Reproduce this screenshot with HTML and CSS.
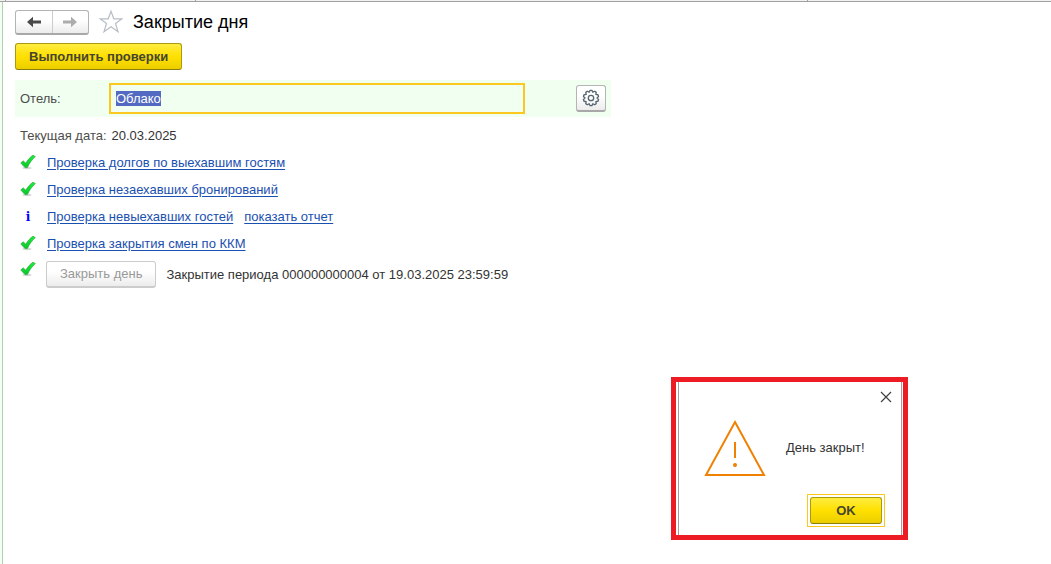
FILE: index.html
```html
<!DOCTYPE html>
<html lang="ru">
<head>
<meta charset="UTF-8">
<meta name="viewport" content="width=device-width, initial-scale=1.0">
<title>Закрытие дня</title>
<link rel="stylesheet" href="styles.css">
</head>
<body>

<svg class="sprite" aria-hidden="true">
  <defs>
    <linearGradient id="check-fill" x1="0" y1="0" x2="0" y2="1">
      <stop offset="0" stop-color="#18f03c"/>
      <stop offset="1" stop-color="#08c828"/>
    </linearGradient>
    <symbol id="check" viewBox="0 0 16 16">
      <ellipse cx="7" cy="14" rx="4.5" ry="1.2" fill="#d8d8d8"/>
      <path d="M.8 9 3 6.8 5.8 9.2C7.8 5.8 10 3.2 13 1.2L15.3 2.6C12 5.6 9.4 9 7.4 13.6L5 13.6Z" fill="url(#check-fill)" stroke="#2fa53c" stroke-width=".7"/>
    </symbol>
  </defs>
</svg>

<div class="tabs">
  <span class="tab tab-first"></span>
  <span class="tab tab-home"></span>
  <span class="tab tab-open"></span>
</div>

<main class="page">
  <header class="title-bar">
    <div class="history">
      <button class="history-button" aria-label="Назад">
        <svg width="16" height="12" viewBox="0 0 16 12"><path d="M1 6 7 .8V4.6H15V7.4H7V11.2Z" fill="#4a4a4a"/></svg>
      </button>
      <button class="history-button" aria-label="Вперед">
        <svg width="16" height="12" viewBox="0 0 16 12"><path d="M15 6 9 .8V4.6H1V7.4H9V11.2Z" fill="#acacac"/></svg>
      </button>
    </div>
    <button class="favorite" aria-label="В избранное">
      <svg width="24" height="24" viewBox="0 0 24 24"><path d="M12 1.2 14.8 8.8H23L16.5 13.5 19 21.8 12 16.8 5 21.8 7.5 13.5 1 8.8H9.2Z" fill="#fff" stroke="#b7bec6" stroke-width="1.2"/></svg>
    </button>
    <h1>Закрытие дня</h1>
  </header>

  <button class="button primary">Выполнить проверки</button>

  <div class="hotel">
    <label for="hotel-input">Отель:</label>
    <input type="text" id="hotel-input" value="Облако" autocomplete="off" spellcheck="false">
    <button class="button settings" aria-label="Настройки">
      <svg width="18" height="18" viewBox="0 0 18 18" fill="none" stroke="#566571" stroke-width="1.3" stroke-linejoin="round">
        <circle cx="9" cy="9" r="2.7"/>
        <path d="M8.06 1.36H9.94L10.85 3.29 12.73 2.27 14.25 3.37 13.85 5.47 15.98 5.75 16.56 7.53 15 9 16.56 10.47 15.98 12.25 13.85 12.53 14.25 14.63 12.73 15.73 10.85 14.71 9.94 16.64H8.06L7.15 14.71 5.27 15.73 3.75 14.63 4.15 12.53 2.02 12.25 1.44 10.47 3 9 1.44 7.53 2.02 5.75 4.15 5.47 3.75 3.37 5.27 2.27 7.15 3.29Z"/>
      </svg>
    </button>
  </div>

  <p class="row date"><span class="caption">Текущая дата:</span> <span>20.03.2025</span></p>

  <div class="row">
    <svg class="status"><use href="#check"/></svg>
    <a href="#">Проверка долгов по выехавшим гостям</a>
  </div>
  <div class="row">
    <svg class="status"><use href="#check"/></svg>
    <a href="#">Проверка незаехавших бронирований</a>
  </div>
  <div class="row">
    <span class="status info">i</span>
    <a href="#">Проверка невыехавших гостей</a>
    <a href="#">показать отчет</a>
  </div>
  <div class="row">
    <svg class="status"><use href="#check"/></svg>
    <a href="#">Проверка закрытия смен по ККМ</a>
  </div>
  <div class="row close-day">
    <svg class="status"><use href="#check"/></svg>
    <button class="button" disabled>Закрыть день</button>
    <span>Закрытие периода 000000000004 от 19.03.2025 23:59:59</span>
  </div>
</main>

<div class="message" role="dialog" aria-labelledby="message-text">
  <div class="message-window">
    <button class="message-close" aria-label="Закрыть">
      <svg width="12" height="12" viewBox="0 0 12 12"><path d="M1 1 11 11M11 1 1 11" stroke="#404040" stroke-width="1.2"/></svg>
    </button>
    <div class="message-body">
      <svg width="62" height="58" viewBox="0 0 62 58" fill="none" stroke="#f08000" stroke-width="2">
        <path d="M31 3 60 56H2Z"/>
        <path d="M31 23V39"/>
        <circle cx="31" cy="46" r="2" fill="#f08000" stroke="none"/>
      </svg>
      <p id="message-text">День закрыт!</p>
    </div>
    <div class="message-focus">
      <button class="button primary">OK</button>
    </div>
  </div>
</div>

<script>
const hotel = document.getElementById("hotel-input");
hotel.focus();
hotel.select();
</script>

</body>
</html>
```
FILE: styles.css
```css
* {
  box-sizing: border-box;
}

body {
  display: flex;
  flex-direction: column;
  min-height: 100vh;
  margin: 0;
  background: #fff;
  color: #333;
  font: 13px/16px "Liberation Sans", Arial, sans-serif;
}

h1,
p {
  margin: 0;
}

button,
input {
  font: inherit;
}

a {
  color: #1a50b0;
  text-underline-offset: 2px;
}

svg {
  display: block;
}

.sprite {
  position: absolute;
  width: 0;
  height: 0;
}

.tabs {
  display: flex;
  height: 2px;
  background: #f2f2f2;
  border-bottom: 1px solid #a0a0a0;
}

.tab {
  border-right: 1px solid #a0a0a0;
}

.tab-first {
  width: 6px;
}

.tab-home {
  width: 190px;
}

.tab-open {
  width: 612px;
}

.page {
  flex: 1;
  padding: 7px 12px;
  border-left: 1px solid #b4ccb4;
  margin-left: 2px;
  box-shadow: -2px 0 #f0fff0;
}

.title-bar {
  display: flex;
  align-items: center;
  height: 26px;
  margin-bottom: 8px;
}

.history {
  display: flex;
  width: 74px;
  height: 25px;
  border: 1px solid #b4b4b4;
  border-bottom: 2px solid #a8a8a8;
  border-radius: 3px;
  background: linear-gradient(#fff 40%, #ececec);
}

.history-button {
  display: flex;
  flex: 1;
  align-items: center;
  justify-content: center;
  padding: 0;
  border: 0;
  background: none;
}

.history-button + .history-button {
  border-left: 1px solid #ccc;
}

.favorite {
  padding: 0;
  margin: 0 10px;
  border: 0;
  background: none;
}

h1 {
  color: #000;
  font-size: 18px;
  font-weight: normal;
  line-height: 24px;
}

.button {
  height: 27px;
  padding: 0 13px;
  border: 1px solid #b4b4b4;
  border-bottom: 2px solid #a8a8a8;
  border-radius: 3px;
  background: linear-gradient(#fff 40%, #ececec);
  color: #404040;
}

.button:disabled {
  border-color: #ccc;
  color: #999;
}

.primary {
  border: 1px solid #a99a10;
  border-bottom-color: #8c7c08;
  background: linear-gradient(#ffec40, #ffe000 50%, #ecce00);
  color: #454530;
  font-weight: bold;
}

.hotel {
  display: flex;
  align-items: center;
  width: 596px;
  max-width: 100%;
  height: 37px;
  padding: 0 5px;
  margin: 10px 0 5px;
  background: #f0fff0;
}

.hotel label,
.caption {
  color: #4d4d4d;
}

.hotel label {
  width: 89px;
}

.hotel input {
  flex: 1;
  min-width: 0;
  height: 31px;
  padding: 0 5px;
  border: 2px solid #fac81e;
  margin-right: 51px;
  outline: 0;
  background: #f0fff0;
  color: #333;
}

.hotel input::selection {
  background: rgba(80, 104, 192, 0.99);
  color: #fff;
}

.settings {
  display: flex;
  align-items: center;
  justify-content: center;
  width: 30px;
  padding: 0;
}

.row {
  display: flex;
  align-items: center;
  gap: 11px;
  height: 27px;
  padding-left: 5px;
}

.date {
  gap: 5px;
}

.status {
  flex: none;
  width: 16px;
  height: 16px;
  margin-bottom: 2px;
}

.info {
  margin: 0;
  color: #00f;
  font: bold 12px/16px "DejaVu Serif", serif;
  text-align: center;
}

.close-day {
  align-items: flex-start;
  gap: 10px;
  height: auto;
  padding-top: 4px;
}

.close-day span {
  line-height: 27px;
}

/* message window over the form */
.message {
  position: absolute;
  top: 377px;
  left: 671px;
  width: 237px;
  padding: 0 1px 0 2px;
  border: 5px solid #ed1c24;
  background: #fff;
}

.message-window {
  display: flex;
  flex-direction: column;
  padding: 8px 8px 8px 25px;
  border: 1px solid #a0a0a0;
  border-width: 0 1px;
}

.message-close {
  align-self: flex-end;
  padding: 1px;
  border: 0;
  background: none;
}

.message-body {
  display: flex;
  align-items: center;
  gap: 20px;
  margin: 15px 0 17px;
}

.message-focus {
  align-self: flex-end;
  padding: 2px;
  border: 1px solid #fac81e;
  margin-right: 8px;
}

.message-focus .button {
  display: block;
  width: 72px;
}
```
